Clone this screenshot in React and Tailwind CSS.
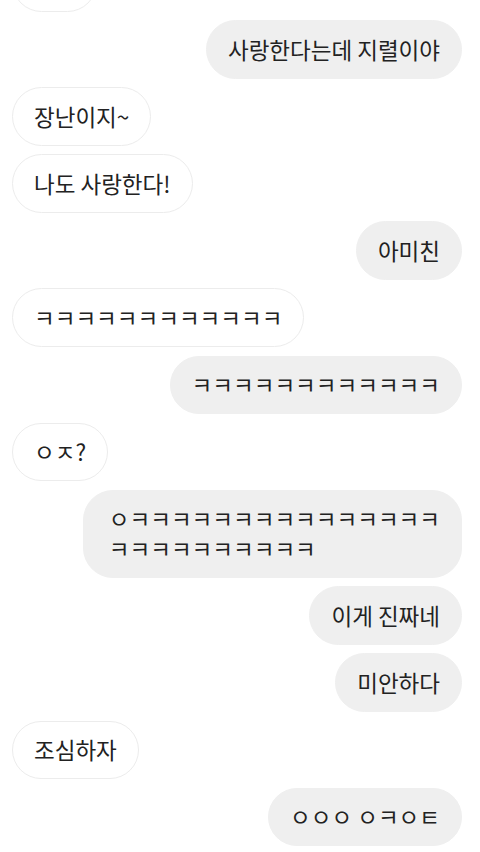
import React from 'react';

const messages = [
  { me: false, text: '응응', hidden: true },
  { me: true, text: '사랑한다는데 지렬이야' },
  { me: false, text: '장난이지~' },
  { me: false, text: '나도 사랑한다!' },
  { me: true, text: '아미친' },
  { me: false, text: 'ㅋㅋㅋㅋㅋㅋㅋㅋㅋㅋㅋㅋ' },
  { me: true, text: 'ㅋㅋㅋㅋㅋㅋㅋㅋㅋㅋㅋㅋ' },
  { me: false, text: 'ㅇㅈ?' },
  { me: true, text: 'ㅇㅋㅋㅋㅋㅋㅋㅋㅋㅋㅋㅋㅋㅋㅋㅋ\nㅋㅋㅋㅋㅋㅋㅋㅋㅋㅋ', wide: true },
  { me: true, text: '이게 진짜네' },
  { me: true, text: '미안하다' },
  { me: false, text: '조심하자' },
  { me: true, text: 'ㅇㅇㅇ ㅇㅋㅇㅌ' },
];

const Bubble = ({ me, text, wide }) => (
  <div className={`flex ${me ? 'justify-end' : 'justify-start'}`}>
    <div
      className={`whitespace-pre rounded-[30px] py-[13.5px] text-[22.5px] leading-[29.5px] text-[#222] ${
        wide ? 'pl-[25px] pr-[21px]' : 'px-[21px]'
      } ${me ? 'bg-[#efefef] border border-[#efefef]' : 'bg-white border border-[#ececec]'}`}
    >
      {text}
    </div>
  </div>
);

export default function App() {
  return (
    <div
      className="w-[480px] h-[852px] overflow-hidden bg-white"
      style={{ fontFamily: '"Noto Sans CJK KR", "Noto Sans", sans-serif' }}
    >
      <div className="-mt-[47px] pl-[12px] pr-[18px] flex flex-col gap-[8.6px]">
        {messages.map((m, i) => (
          <Bubble key={i} me={m.me} text={m.text} wide={m.wide} />
        ))}
      </div>
    </div>
  );
}
